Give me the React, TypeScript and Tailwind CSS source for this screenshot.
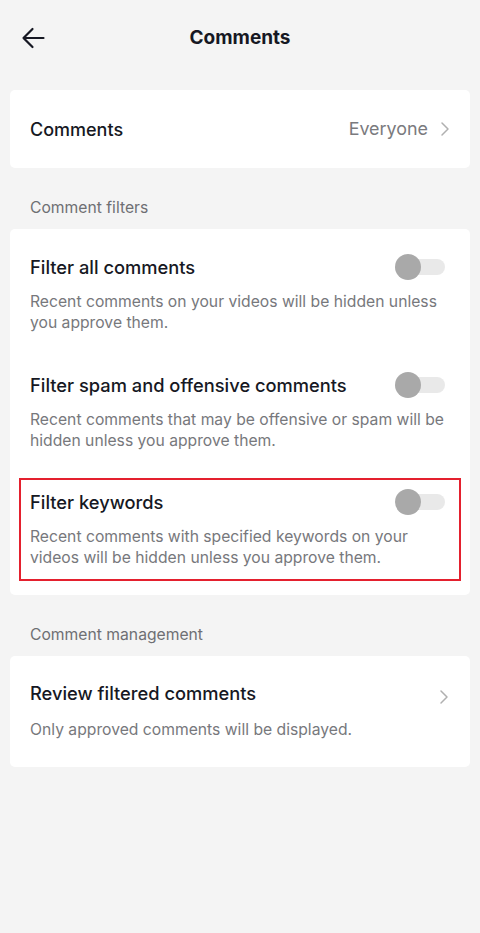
import React from "react";

const font = { fontFamily: '"Inter", "Liberation Sans", sans-serif' };

function Toggle() {
  return (
    <div className="relative w-[50px] h-[26px] shrink-0">
      <div className="absolute right-0 top-[5px] h-[16px] w-[42px] rounded-full bg-[#e9e9e9]" />
      <div className="absolute left-0 top-0 h-[26px] w-[26px] rounded-full bg-[#a9a9a9]" />
    </div>
  );
}

function Chevron() {
  return (
    <svg width="10" height="16" viewBox="0 0 10 16" fill="none" className="shrink-0">
      <path d="M2 2 L8 8 L2 14" stroke="#b0b0b0" strokeWidth="1.5" strokeLinecap="round" strokeLinejoin="round" />
    </svg>
  );
}

function FilterRow({ title, desc }: { title: string; desc: string[] }) {
  return (
    <div>
      <div className="flex items-center justify-between h-[24px]">
        <div className="text-[18.3px] font-medium text-[#161823] leading-[24px]">{title}</div>
        <div className="mr-[5px]">
          <Toggle />
        </div>
      </div>
      <div className="mt-[12px] text-[15.7px] leading-[21px] text-[#77787c]">
        {desc.map((d, i) => (
          <div key={i}>{d}</div>
        ))}
      </div>
    </div>
  );
}

export default function App() {
  return (
    <div className="min-h-[933px] w-[480px] bg-[#f4f4f4]" style={font}>
      <div className="relative flex items-center justify-center h-[76px]">
        <svg className="absolute left-[21px] top-[27px]" width="24" height="22" viewBox="0 0 24 22" fill="none">
          <path d="M22.5 11 H2.5 M11.5 2 L2.5 11 L11.5 20" stroke="#161823" strokeWidth="2.2" strokeLinecap="round" strokeLinejoin="round" />
        </svg>
        <div className="text-[19px] font-bold text-[#161823]">Comments</div>
      </div>

      <div className="mx-[10px] mt-[14px] h-[78px] rounded-[5px] bg-white px-[20px] flex items-center justify-between">
        <div className="text-[18px] font-medium text-[#161823]">Comments</div>
        <div className="flex items-center gap-[12px]">
          <span className="text-[17.9px] text-[#7a7a7e]">Everyone</span>
          <Chevron />
        </div>
      </div>

      <div className="mt-[30px] px-[30px] text-[15.7px] leading-[20px] text-[#6e6f73]">Comment filters</div>

      <div className="mx-[10px] mt-[11px] rounded-[5px] bg-white px-[20px] pt-[26px] pb-[26.5px]">
        <FilterRow
          title="Filter all comments"
          desc={["Recent comments on your videos will be hidden unless", "you approve them."]}
        />
        <div className="mt-[39.5px]">
          <FilterRow
            title="Filter spam and offensive comments"
            desc={["Recent comments that may be offensive or spam will be", "hidden unless you approve them."]}
          />
        </div>
        <div className="relative mt-[39.5px]">
          <div className="absolute left-[-11px] right-[-11px] top-[-12px] bottom-[-12.5px] border-2 border-[#e4202e] pointer-events-none" />
          <FilterRow
            title="Filter keywords"
            desc={["Recent comments with specified keywords on your", "videos will be hidden unless you approve them."]}
          />
        </div>
      </div>

      <div className="mt-[30px] px-[30px] text-[15.7px] leading-[20px] text-[#6e6f73]">Comment management</div>

      <div className="mx-[10px] mt-[11px] rounded-[5px] bg-white px-[20px] pt-[26px] pb-[26.5px]">
        <div className="flex items-center justify-between h-[24px]">
          <div className="text-[18.3px] font-medium text-[#161823]">Review filtered comments</div>
          <div className="mt-[6px] mr-[1px]">
            <Chevron />
          </div>
        </div>
        <div className="mt-[13.5px] text-[15.7px] leading-[21px] text-[#77787c]">Only approved comments will be displayed.</div>
      </div>
    </div>
  );
}
